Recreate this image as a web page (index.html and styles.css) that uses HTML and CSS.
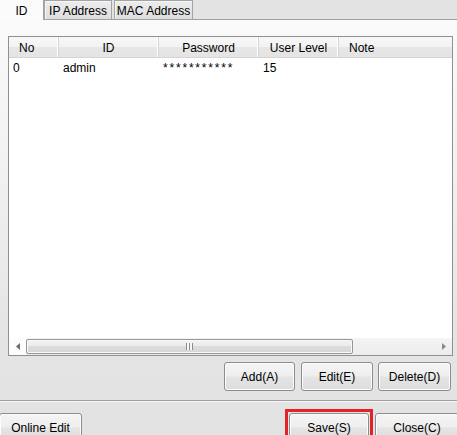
FILE: index.html
```html
<!DOCTYPE html>
<html>
<head>
<meta charset="utf-8">
<link rel="stylesheet" href="styles.css">
</head>
<body>
<div class="window">
  <div class="tabs">
    <div class="tab active">ID</div>
    <div class="tab tab-ip">IP Address</div>
    <div class="tab tab-mac">MAC Address</div>
  </div>
  <div class="panel">
    <div class="list">
      <div class="list-head">
        <div class="hcol c-no left">No</div>
        <div class="hcol c-id">ID</div>
        <div class="hcol c-pw">Password</div>
        <div class="hcol c-lv">User Level</div>
        <div class="hcol c-note left">Note</div>
      </div>
      <div class="list-body">
        <div class="row">
          <div class="cell c-no">0</div>
          <div class="cell c-id">admin</div>
          <div class="cell c-pw stars">***********</div>
          <div class="cell c-lv">15</div>
          <div class="cell c-note"></div>
        </div>
      </div>
      <div class="hscroll">
        <div class="sb-btn">
          <svg width="4" height="7" viewBox="0 0 4 7"><polygon points="4,0 0,3.5 4,7" fill="#6d6d6d"/></svg>
        </div>
        <div class="sb-track">
          <div class="sb-thumb"><span class="grip"></span></div>
        </div>
        <div class="sb-btn sb-right">
          <svg width="4" height="7" viewBox="0 0 4 7"><polygon points="0,0 4,3.5 0,7" fill="#8a8a8a"/></svg>
        </div>
      </div>
    </div>
    <div class="actions">
      <button class="btn b-add">Add(A)</button>
      <button class="btn b-edit">Edit(E)</button>
      <button class="btn b-del">Delete(D)</button>
    </div>
  </div>
  <div class="footer">
    <button class="btn b-online">Online Edit</button>
    <div class="spacer"></div>
    <div class="save-frame"><button class="btn b-save">Save(S)</button></div>
    <button class="btn b-close">Close(C)</button>
  </div>
</div>
</body>
</html>
```

FILE: styles.css
```css
* { box-sizing: border-box; }
html, body {
  margin: 0;
  padding: 0;
  background: #e3e3e3;
  overflow: hidden;
}
body {
  font-family: "Liberation Sans", Arial, sans-serif;
  font-size: 12px;
  color: #000;
}
.window {
  width: 457px;
  height: 435px;
  overflow: hidden;
  background: #e3e3e3;
}
.tabs {
  display: flex;
  align-items: flex-start;
  height: 19px;
}
.tab {
  height: 19px;
  border: 1px solid #a3a3a3;
  border-bottom: 0;
  background: linear-gradient(#ececec, #dedede);
  box-shadow: inset 1px 1px 0 #f6f6f6;
  display: flex;
  align-items: center;
  justify-content: center;
  line-height: 1;
  padding-top: 1px;
}
.tab.active {
  position: relative;
  z-index: 1;
  width: 45px;
  height: 20px;
  margin-left: -1px;
  background: #fbfbfb;
  border-color: #a3a3a3;
  border-top: 0;
  box-shadow: none;
}
.tab-ip { width: 68px; }
.tab-mac { width: 79px; margin-left: 2px; }

.panel {
  width: 462px;
  height: 382px;
  border-top: 1px solid #a0a0a0;
  border-bottom: 1px solid #a0a0a0;
  background: linear-gradient(#fafafa 0%, #f1f1f1 40%, #e5e5e5 80%, #e3e3e3 100%);
  box-shadow: 0 1px 0 #f6f6f6;
  padding: 16px 0 0 8px;
}
.list {
  width: 445px;
  height: 320px;
  border: 1px solid #8f9090;
  background: #fff;
  display: flex;
  flex-direction: column;
}
.list-head {
  display: flex;
  height: 21px;
  border-bottom: 1px solid #d5d5d5;
  background: linear-gradient(#f7f7f7 0%, #f2f2f2 50%, #e7e7e7 52%, #e4e4e4 100%);
}
.hcol {
  height: 100%;
  display: flex;
  align-items: center;
  justify-content: center;
  border-right: 1px solid #d5d5d5;
  box-shadow: inset -1px 0 0 #fff;
  padding-top: 1px;
}
.hcol.left { justify-content: flex-start; padding-left: 10px; }
.hcol.c-note { border-right: 0; box-shadow: none; }
.c-no { width: 50px; }
.c-id { width: 100px; }
.c-pw { width: 100px; }
.c-lv { width: 80px; }
.c-note { flex: 1; }
.list-body {
  flex: 1;
  padding-top: 1px;
}
.row {
  display: flex;
  height: 18px;
  align-items: center;
}
.cell { padding-left: 4px; }
.stars { letter-spacing: 1.8px; }

.hscroll {
  height: 17px;
  display: flex;
  background: linear-gradient(#f4f4f4, #ececec);
}
.sb-btn {
  width: 17px;
  height: 17px;
  background: #fdfdfd;
  display: flex;
  align-items: center;
  justify-content: center;
}
.sb-right { background: transparent; }
.sb-track {
  flex: 1;
  padding: 1px 0;
}
.sb-thumb {
  width: 327px;
  height: 15px;
  border: 1px solid #979797;
  border-radius: 2px;
  background: linear-gradient(#f2f2f2 0%, #ebebeb 45%, #dcdcdc 50%, #d6d6d6 100%);
  box-shadow: inset 0 0 0 1px #f9f9f9;
  display: flex;
  align-items: center;
  justify-content: center;
}
.grip {
  width: 7px;
  height: 7px;
  background: repeating-linear-gradient(90deg, #8a8a8a 0 1px, #f7f7f7 1px 3px);
}

.actions {
  display: flex;
  justify-content: flex-end;
  gap: 5px;
  width: 443px;
  margin-top: 6px;
}
.btn {
  height: 29px;
  border: 1px solid #8d8d8d;
  border-radius: 3px;
  background: linear-gradient(#f5f5f5 0%, #eeeeee 48%, #e4e4e4 52%, #dddddd 100%);
  box-shadow: inset 0 0 0 1px #fcfcfc;
  font-family: "Liberation Sans", Arial, sans-serif;
  font-size: 12px;
  color: #000;
  padding: 0;
  margin: 0;
}
.b-add { width: 71px; margin-right: 1px; }
.b-edit { width: 72px; }
.b-del { width: 73px; }

.footer {
  display: flex;
  align-items: flex-start;
  padding-top: 8px;
}
.b-online {
  width: 83px;
  margin-left: -1px;
  margin-top: 4px;
}
.spacer { flex: 1; }
.save-frame {
  border: 3px solid #e5212a;
  padding: 1px;
  display: flex;
}
.b-save {
  width: 80px;
}
.b-close {
  width: 84px;
  margin-top: 4px;
  margin-left: 2px;
  margin-right: -2px;
}
```
